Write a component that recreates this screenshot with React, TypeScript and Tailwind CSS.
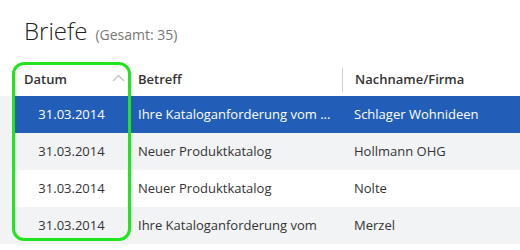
import React from "react";

const rows = [
	{ datum: "31.03.2014", betreff: "Ihre Kataloganforderung vom ...", name: "Schlager Wohnideen", selected: true },
	{ datum: "31.03.2014", betreff: "Neuer Produktkatalog", name: "Hollmann OHG" },
	{ datum: "31.03.2014", betreff: "Neuer Produktkatalog", name: "Nolte" },
	{ datum: "31.03.2014", betreff: "Ihre Kataloganforderung vom", name: "Merzel" },
];

const App = () => {
	return (
		<div
			className="relative w-[520px] h-[250px] overflow-hidden bg-white text-[#333]"
			style={{ fontFamily: '"Open Sans", "Noto Sans", sans-serif' }}
		>
			<div className="flex items-baseline gap-2 pl-6 pt-[19px] h-[63px]">
				<h1 className="text-[24px] font-light leading-none text-[#222]">Briefe</h1>
				<span className="text-[14px] text-[#777]">(Gesamt: 35)</span>
			</div>
			<div className="flex">
				<div className="w-[15px] mt-[33px] bg-[#f2f3f5]" />
				<div className="flex-1">
					<div className="flex h-[33px] items-center text-[13px] font-semibold">
						<div className="w-[113px] flex items-center justify-between pl-[9px] pr-[3px] h-full">
							<span>Datum</span>
							<svg width="13" height="8" viewBox="0 0 13 8" className="mb-1">
								<path d="M1 7 L6.5 1.5 L12 7" fill="none" stroke="#c8c8c8" strokeWidth="1.5" />
							</svg>
						</div>
						<div className="w-[214px] h-[24px] flex items-center border-l border-[#d0d0d0] pl-[9px]">
							Betreff
						</div>
						<div className="flex-1 h-[24px] flex items-center border-l border-[#d0d0d0] pl-[12px]">
							Nachname/Firma
						</div>
					</div>
					{rows.map((r, i) => (
						<div
							key={i}
							className={`flex h-[37px] items-center text-[13px] ${
								r.selected ? "bg-[#225eb7] text-white" : i % 2 === 1 ? "bg-[#f2f3f5]" : "bg-white"
							}`}
						>
							<div className="w-[113px] text-center">{r.datum}</div>
							<div className="w-[214px] pl-[10px] whitespace-nowrap overflow-hidden">{r.betreff}</div>
							<div className="flex-1 pl-[12px] whitespace-nowrap">{r.name}</div>
						</div>
					))}
				</div>
			</div>
			<div className="absolute left-[12px] top-[62px] w-[119px] h-[179px] rounded-[12px] border-[3px] border-[#22e51f] pointer-events-none" />
		</div>
	);
};

export default App;
